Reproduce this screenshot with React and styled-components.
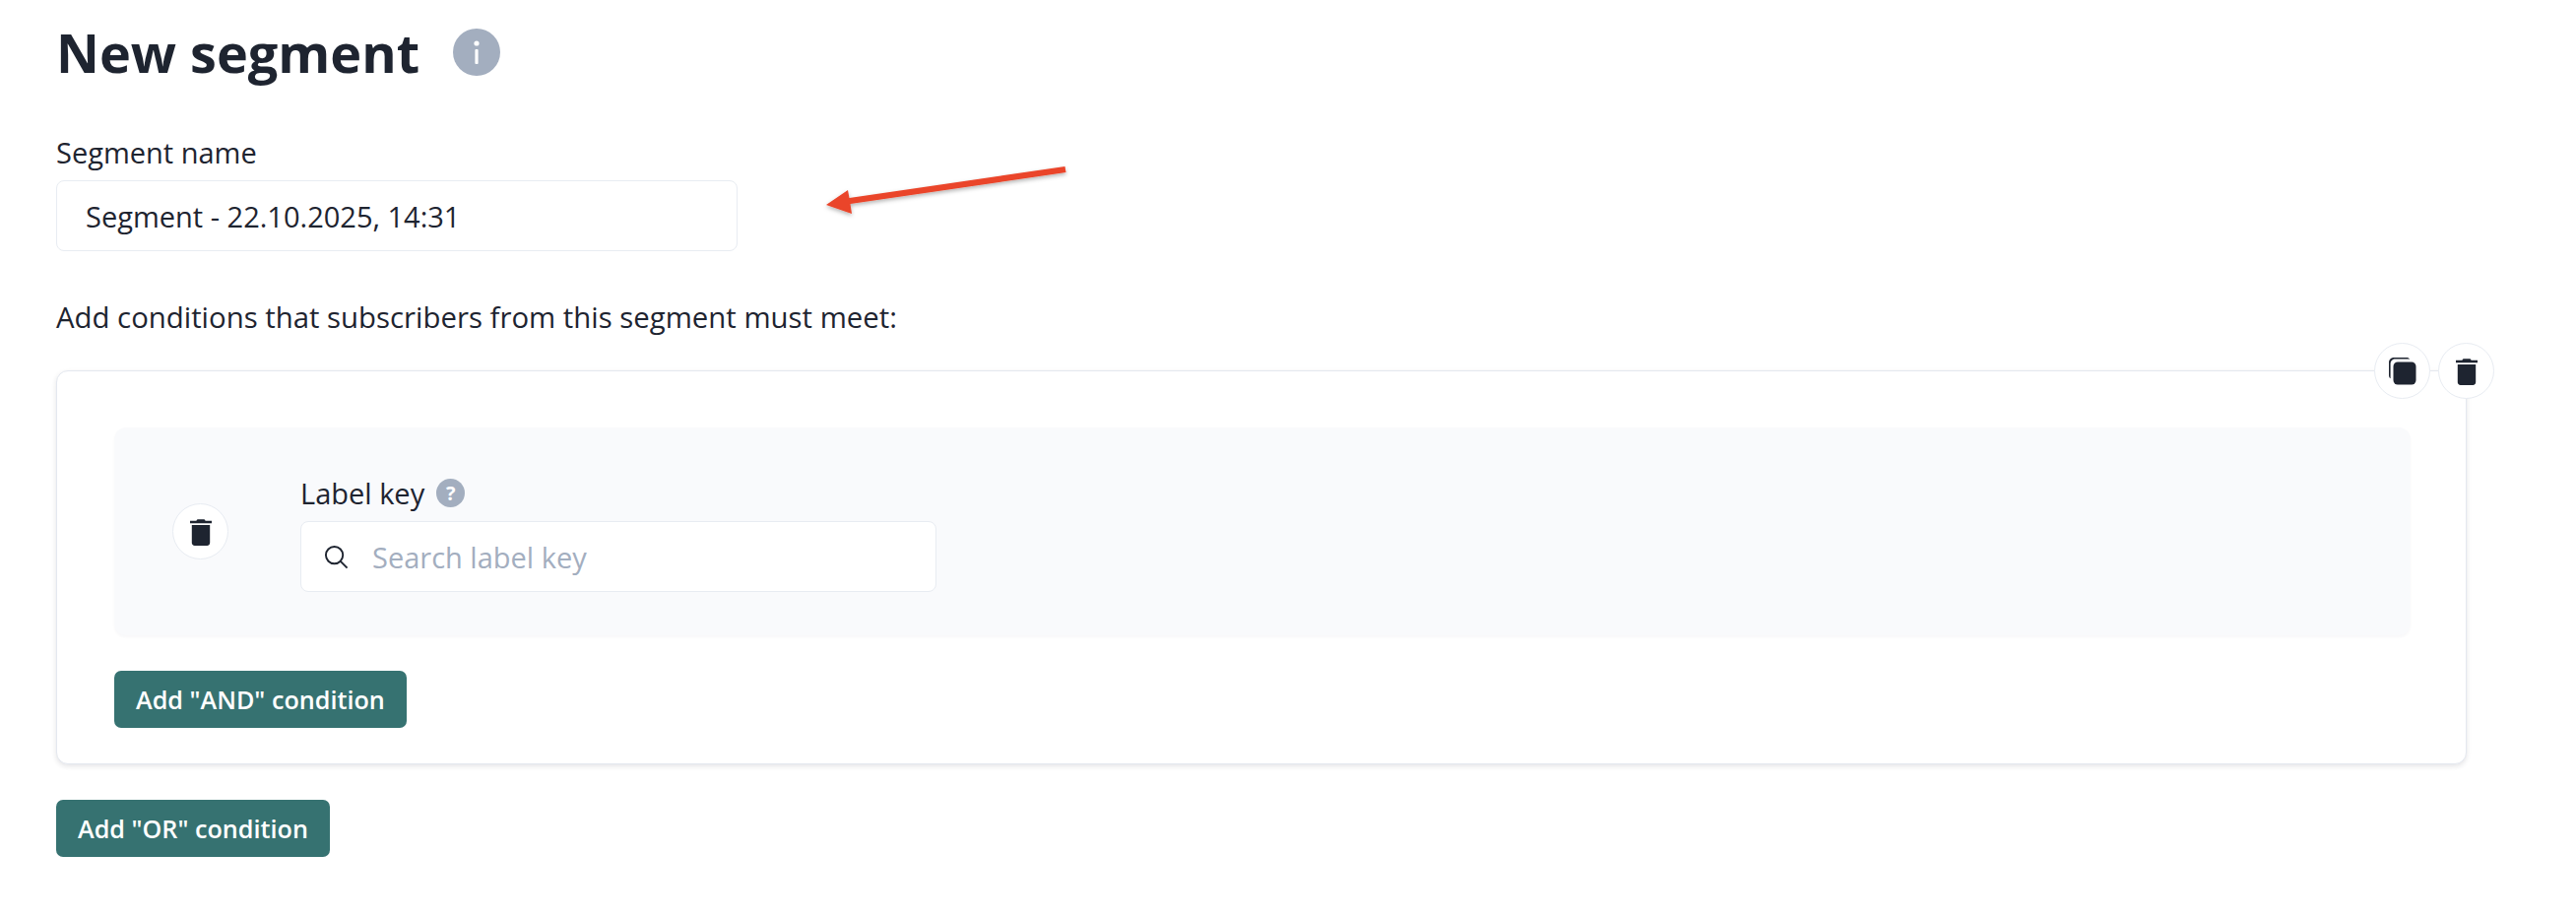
import React from "react"
import styled, { createGlobalStyle } from "styled-components"

const GlobalStyle = createGlobalStyle`
  html, body {
    margin: 0;
    padding: 0;
    background: #fff;
  }
  body {
    font-family: "Open Sans", "Liberation Sans", sans-serif;
    color: #1e2430;
  }
`

const Page = styled.div`
  position: relative;
  width: 2616px;
  height: 932px;
  overflow: hidden;
  box-sizing: border-box;
  padding: 29px 0 0 57px;
`

const Header = styled.div`
  display: flex;
  align-items: center;
  gap: 34px;
  height: 48px;
`

const Title = styled.h1`
  margin: 0;
  font-size: 54px;
  line-height: 48px;
  font-weight: 700;
  color: #1e2430;
`

const InfoBadge = styled.span`
  width: 48px;
  height: 48px;
  border-radius: 50%;
  background: #a3aebf;
  display: flex;
  align-items: center;
  justify-content: center;
`

const FieldLabel = styled.div`
  font-size: 29px;
  line-height: 40px;
  margin-bottom: 8px;
  color: #1e2430;
`

const NameBlock = styled.div`
  margin-top: 58px;
`

const TextBox = styled.div`
  box-sizing: border-box;
  width: ${(props) => props.$width}px;
  height: 72px;
  display: flex;
  align-items: center;
  background: #fff;
  border: 1.5px solid #e8ecf2;
  border-radius: 8px;
  font-size: 29px;
  padding-left: ${(props) => props.$padding}px;
`

const Placeholder = styled.span`
  color: #a3aebf;
  margin-left: 24px;
`

const Intro = styled.p`
  margin: 47px 0 0;
  font-size: 29.35px;
  line-height: 40px;
`

const Card = styled.section`
  position: relative;
  box-sizing: border-box;
  width: 2448px;
  height: 400px;
  margin-top: 34px;
  padding: 57px 56px 0 58px;
  background: #fff;
  border: 1px solid #e4e8ef;
  border-radius: 12px;
  box-shadow: 0 2px 5px rgba(30, 36, 48, 0.12);
`

const CardActions = styled.div`
  position: absolute;
  top: -29px;
  right: -29px;
  display: flex;
  gap: 8px;
`

const RoundButton = styled.span`
  box-sizing: border-box;
  width: 57px;
  height: 57px;
  flex: none;
  border-radius: 50%;
  background: #fff;
  border: 1.5px solid #e8ecf2;
  display: flex;
  align-items: center;
  justify-content: center;
`

const Panel = styled.div`
  height: 211px;
  display: flex;
  align-items: center;
  gap: 73px;
  padding-left: 59px;
  background: #f9fafc;
  border-radius: 12px;
  box-shadow: 0 2px 3px rgba(30, 36, 48, 0.03);
`

const LabelRow = styled.div`
  display: flex;
  align-items: center;
  gap: 12px;
  height: 44px;
  margin-bottom: 7px;
  font-size: 29px;
`

const HelpBadge = styled.span`
  width: 29px;
  height: 29px;
  border-radius: 50%;
  background: #a3aebf;
  color: #fff;
  font-size: 20px;
  line-height: 29px;
  font-weight: 700;
  text-align: center;
`

const ActionButton = styled.button`
  display: block;
  box-sizing: border-box;
  height: 58px;
  padding: 0 22px;
  border: 0;
  border-radius: 7px;
  background: #367271;
  color: #fff;
  font-family: inherit;
  font-size: 25.2px;
  font-weight: 600;
`

const AndButton = styled(ActionButton)`
  margin-top: 36px;
`

const OrButton = styled(ActionButton)`
  margin-top: 36px;
`

const Arrow = styled.svg`
  position: absolute;
  left: 830px;
  top: 160px;
`

const TrashIcon = () => (
  <svg width="22" height="28" viewBox="0 0 22 28" fill="#1e2430">
    <path d="M7.5 1.2h7l1.2 1.6H22v2.4H0V2.8h6.3z" />
    <path d="M1.8 7h18.4v18c0 1.7-1.2 2.9-2.9 2.9H4.7c-1.7 0-2.9-1.2-2.9-2.9z" />
  </svg>
)

const CopyIcon = () => (
  <svg width="28" height="28" viewBox="0 0 28 28" fill="#1e2430">
    <path d="M5 0h13c1.4 0 2.6.6 3.3 1.6H6.5C3.7 1.6 1.6 3.7 1.6 6.5v14.8C.6 20.6 0 19.4 0 18V5c0-2.8 2.2-5 5-5z" />
    <rect x="4.5" y="4.5" width="23" height="23" rx="4.5" />
  </svg>
)

const App = () => (
  <>
    <GlobalStyle />
    <Page>
      <Header>
        <Title>New segment</Title>
        <InfoBadge>
          <svg width="6" height="24" viewBox="0 0 6 24" fill="#fff">
            <circle cx="3" cy="3" r="2.6" />
            <rect x="1.4" y="9" width="3.2" height="15" rx="1" />
          </svg>
        </InfoBadge>
      </Header>
      <NameBlock>
        <FieldLabel>Segment name</FieldLabel>
        <TextBox $width={692} $padding={29}>Segment - 22.10.2025, 14:31</TextBox>
      </NameBlock>
      <Intro>Add conditions that subscribers from this segment must meet:</Intro>
      <Card>
        <CardActions>
          <RoundButton><CopyIcon /></RoundButton>
          <RoundButton><TrashIcon /></RoundButton>
        </CardActions>
        <Panel>
          <RoundButton><TrashIcon /></RoundButton>
          <div>
            <LabelRow>
              Label key
              <HelpBadge>?</HelpBadge>
            </LabelRow>
            <TextBox $width={646} $padding={23}>
              <svg width="25" height="25" viewBox="0 0 26 26" fill="none" stroke="#1e2430" strokeWidth="2">
                <circle cx="11" cy="11" r="9" />
                <path d="M17.5 17.5L24.5 24.5" />
              </svg>
              <Placeholder>Search label key</Placeholder>
            </TextBox>
          </div>
        </Panel>
        <AndButton>Add "AND" condition</AndButton>
      </Card>
      <OrButton>Add "OR" condition</OrButton>
      <Arrow width="262" height="70" viewBox="0 0 262 70">
        <defs>
          <filter id="arrowShadow" x="-10%" y="-40%" width="120%" height="200%">
            <feDropShadow dx="0" dy="2" stdDeviation="2" floodColor="#000" floodOpacity="0.3" />
          </filter>
        </defs>
        <path
          fill="#ea4429"
          filter="url(#arrowShadow)"
          d="M251.5 9L252.5 15 33.5 47 35 57 9 48 31 33 32.5 41z"
        />
      </Arrow>
    </Page>
  </>
)

export default App
